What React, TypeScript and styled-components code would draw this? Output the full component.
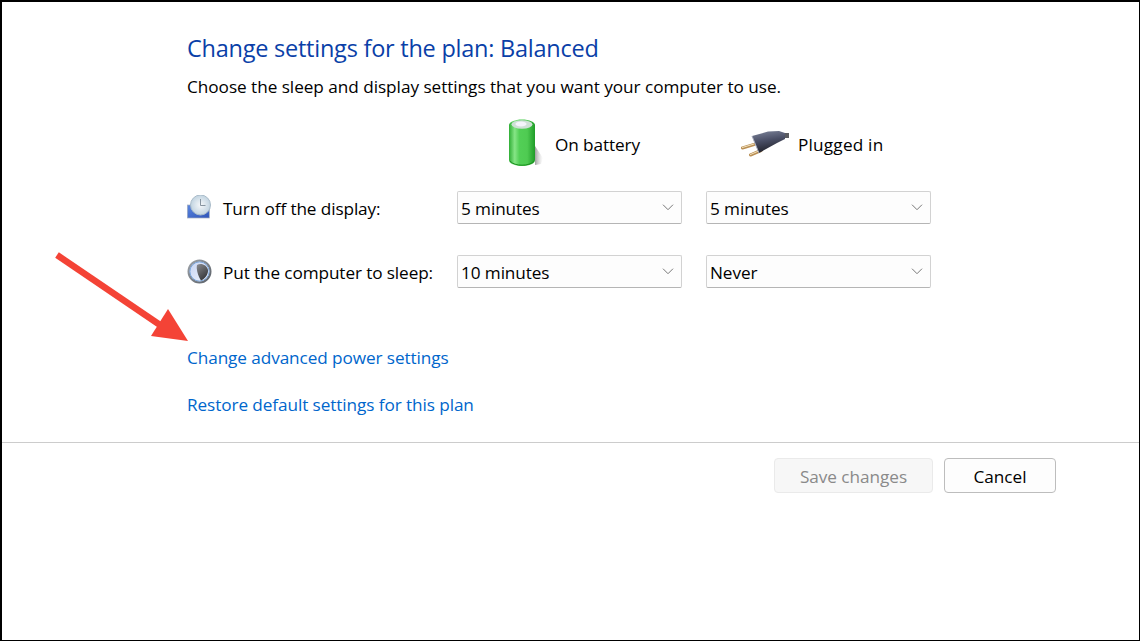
import React from "react";
import styled, { createGlobalStyle } from "styled-components";

const Global = createGlobalStyle`
  html, body { margin: 0; padding: 0; background: #fff; }
  body { font-family: "Open Sans", "Noto Sans", sans-serif; color: #000; }
`;

const Page = styled.div`
  position: relative;
  box-sizing: border-box;
  width: 1140px;
  height: 641px;
  overflow: hidden;
  background: #fff;
  border-style: solid;
  border-color: #000;
  border-width: 2px 1px 1px 2px;
`;

const Content = styled.div`
  display: flex;
  flex-direction: column;
  padding: 30px 0 0 185px;
`;

const Title = styled.h1`
  margin: 0;
  font-size: 23.5px;
  line-height: 32px;
  font-weight: 400;
  letter-spacing: -0.24px;
  color: #0a3fa8;
`;

const Subtitle = styled.p`
  margin: 11px 0 0;
  font-size: 17.2px;
  line-height: 24px;
  letter-spacing: -0.04px;
`;

const Grid = styled.div`
  display: grid;
  grid-template-columns: 246px 225px 225px;
  column-gap: 24px;
  margin-top: 10px;
  align-items: center;
`;

const HeaderRow = styled.div`
  display: contents;
`;

const HeaderCell = styled.div<{ $gap: number; $pad: number; $spacing: number }>`
  display: flex;
  align-items: center;
  height: 70px;
  margin-bottom: 12px;
  gap: ${(p) => p.$gap}px;
  padding-left: ${(p) => p.$pad}px;
  font-size: 17.2px;
  letter-spacing: ${(p) => p.$spacing}px;
`;

const RowLabel = styled.div<{ $mt: number }>`
  display: flex;
  align-items: center;
  gap: 11px;
  height: 33px;
  margin-top: ${(p) => p.$mt}px;
  font-size: 17.2px;
  letter-spacing: -0.11px;
`;

const TextNudge = styled.span`
  padding-top: 2px;
`;

const Select = styled.div<{ $mt: number }>`
  box-sizing: border-box;
  display: flex;
  align-items: center;
  justify-content: space-between;
  height: 33px;
  margin-top: ${(p) => p.$mt}px;
  padding: 0 7px 0 3px;
  background: #fdfdfd;
  border: 1px solid #d2d2d2;
  border-bottom-color: #b5b5b5;
  border-radius: 2px;
  font-size: 17.2px;
  letter-spacing: -0.1px;
`;

const Links = styled.div`
  display: flex;
  flex-direction: column;
  gap: 22px;
  margin-top: 57px;
`;

const Link = styled.a`
  font-size: 17.2px;
  line-height: 25px;
  letter-spacing: -0.09px;
  color: #0066cc;
`;

const Divider = styled.div`
  height: 1px;
  margin-top: 25px;
  background: #cccccc;
`;

const Footer = styled.div`
  display: flex;
  justify-content: flex-end;
  gap: 11px;
  padding: 15px 83px 0 0;
`;

const Button = styled.div<{ $disabled?: boolean }>`
  box-sizing: border-box;
  display: flex;
  align-items: center;
  justify-content: center;
  height: 35px;
  padding-top: 2px;
  width: ${(p) => (p.$disabled ? 159 : 112)}px;
  border-radius: 4px;
  font-size: 17.2px;
  letter-spacing: -0.05px;
  background: ${(p) => (p.$disabled ? "#f7f7f7" : "#fdfdfd")};
  border: 1px solid ${(p) => (p.$disabled ? "#eaeaea" : "#bdbdbd")};
  color: ${(p) => (p.$disabled ? "#8a8a8a" : "#000")};
`;

const ArrowLayer = styled.svg`
  position: absolute;
  left: -2px;
  top: -2px;
  pointer-events: none;
`;

const Chevron = () => (
  <svg width="12" height="7" viewBox="0 0 12 7" fill="none">
    <path d="M1 .7 6 5.700l5-5" stroke="#777" strokeWidth="1" />
  </svg>
);

const BatteryIcon = () => (
  <svg width="36" height="50" viewBox="0 0 36 50">
    <defs>
      <linearGradient id="bat" x1="0" x2="1" y1="0" y2="0">
        <stop offset="0" stopColor="#2fae35" />
        <stop offset="0.22" stopColor="#86e586" />
        <stop offset="0.4" stopColor="#52cf56" />
        <stop offset="0.7" stopColor="#4fcb52" />
        <stop offset="1" stopColor="#1f9c28" />
      </linearGradient>
      <linearGradient id="batShadow" x1="0" x2="1" y1="0" y2="0">
        <stop offset="0" stopColor="#8f8f8f" stopOpacity="0.85" />
        <stop offset="1" stopColor="#ccc" stopOpacity="0" />
      </linearGradient>
    </defs>
    <path d="M27 27 35 39 33 45 27 46Z" fill="url(#batShadow)" />
    <path d="M1 6c0-3 5.500-5.500 13-5.500S27 3 27 6v35c0 3.500-5.500 6-13 6S1 44.500 1 41Z" fill="url(#bat)" />
    <ellipse cx="14" cy="5.500" rx="10.500" ry="4.200" fill="#cfe0d6" />
    <ellipse cx="13" cy="5" rx="5.500" ry="2.600" fill="#f5f4fb" />
    <path d="M2 42c2.500 3 7 4.200 12 4.200S23.500 45 26 42" fill="none" stroke="#1c8f20" strokeWidth="1" />
  </svg>
);

const PlugIcon = () => (
  <svg width="48" height="28" viewBox="0 0 48 28">
    <defs>
      <linearGradient id="plug" x1="0" x2="0.25" y1="0" y2="1">
        <stop offset="0" stopColor="#7f869c" />
        <stop offset="0.5" stopColor="#4a4f66" />
        <stop offset="1" stopColor="#22232c" />
      </linearGradient>
    </defs>
    <path d="M1.500 18 13 14.500M9.500 25 20 20.500" stroke="#b98f55" strokeWidth="3" strokeLinecap="round" />
    <path d="M1.500 17.500 13 14M9.500 24.500 20 20" stroke="#f3e2bd" strokeWidth="1" strokeLinecap="round" />
    <path d="M42 3 48 3V8L42 8Z" fill="#5a5b60" />
    <path d="M11 6 27 1.500 38 1 44 3 44 9 36 13 18 23Z" fill="url(#plug)" />
    <path d="M11 6 18 23" stroke="#a4a9bb" strokeWidth="1" />
  </svg>
);

const ClockIcon = () => (
  <svg width="25" height="25" viewBox="0 0 25 25">
    <defs>
      <linearGradient id="scr" x1="0" x2="1" y1="0" y2="1">
        <stop offset="0" stopColor="#5b86e0" />
        <stop offset="1" stopColor="#2f55b8" />
      </linearGradient>
      <radialGradient id="face" cx="0.5" cy="0.5" r="0.55">
        <stop offset="0" stopColor="#f6f8fa" />
        <stop offset="1" stopColor="#bcd0de" />
      </radialGradient>
    </defs>
    <rect x="0.300" y="10" width="22" height="13" fill="url(#scr)" stroke="#a5afbf" strokeWidth="0.7" />
    <circle cx="13.500" cy="10" r="10" fill="url(#face)" stroke="#a9bbc9" />
    <path d="M13.500 4v6.500h5" fill="none" stroke="#7c8a96" strokeWidth="0.9" />
  </svg>
);

const MoonIcon = () => (
  <svg width="25" height="25" viewBox="0 0 25 25">
    <defs>
      <linearGradient id="ring" x1="0" x2="1" y1="0" y2="1">
        <stop offset="0" stopColor="#9ea3a9" />
        <stop offset="1" stopColor="#5a6068" />
      </linearGradient>
      <linearGradient id="dark" x1="0" x2="0.6" y1="0" y2="1">
        <stop offset="0" stopColor="#8a8b8f" />
        <stop offset="1" stopColor="#36373a" />
      </linearGradient>
      <linearGradient id="disc" x1="0" x2="1" y1="0" y2="1">
        <stop offset="0" stopColor="#c4d2f2" />
        <stop offset="1" stopColor="#f1f4fc" />
      </linearGradient>
    </defs>
    <circle cx="12.500" cy="12.500" r="11" fill="url(#disc)" stroke="url(#ring)" strokeWidth="2" />
    <circle cx="12.500" cy="12.500" r="9.600" fill="none" stroke="#6a9bd6" strokeWidth="0.8" />
    <path d="M10 6C14 3.500 20 6 21 11 21.500 15 18 20 14 21.500 11 17 9 10 10 6Z" fill="url(#dark)" />
  </svg>
);

export default function App() {
  return (
    <Page>
      <Global />
      <Content>
        <Title>Change settings for the plan: Balanced</Title>
        <Subtitle>Choose the sleep and display settings that you want your computer to use.</Subtitle>
        <Grid>
          <HeaderRow>
            <div />
            <HeaderCell $gap={11} $pad={51} $spacing={-0.1}>
              <BatteryIcon />
              On battery
            </HeaderCell>
            <HeaderCell $gap={9} $pad={35} $spacing={0.2}>
              <PlugIcon />
              Plugged in
            </HeaderCell>
          </HeaderRow>
          <RowLabel $mt={0}>
            <ClockIcon />
            <TextNudge>Turn off the display:</TextNudge>
          </RowLabel>
          <Select $mt={0}>
            <TextNudge>5 minutes</TextNudge>
            <Chevron />
          </Select>
          <Select $mt={0}>
            <TextNudge>5 minutes</TextNudge>
            <Chevron />
          </Select>
          <RowLabel $mt={31}>
            <MoonIcon />
            <TextNudge>Put the computer to sleep:</TextNudge>
          </RowLabel>
          <Select $mt={31}>
            <TextNudge>10 minutes</TextNudge>
            <Chevron />
          </Select>
          <Select $mt={31}>
            <TextNudge>Never</TextNudge>
            <Chevron />
          </Select>
        </Grid>
        <Links>
          <Link>Change advanced power settings</Link>
          <Link>Restore default settings for this plan</Link>
        </Links>
      </Content>
      <Divider />
      <Footer>
        <Button $disabled>Save changes</Button>
        <Button>Cancel</Button>
      </Footer>
      <ArrowLayer width="1140" height="641" viewBox="0 0 1140 641">
        <path d="M57 255 163 327" stroke="#f44336" strokeWidth="6.500" />
        <path d="M168 309 188 341 151 336Z" fill="#f44336" />
      </ArrowLayer>
    </Page>
  );
}
